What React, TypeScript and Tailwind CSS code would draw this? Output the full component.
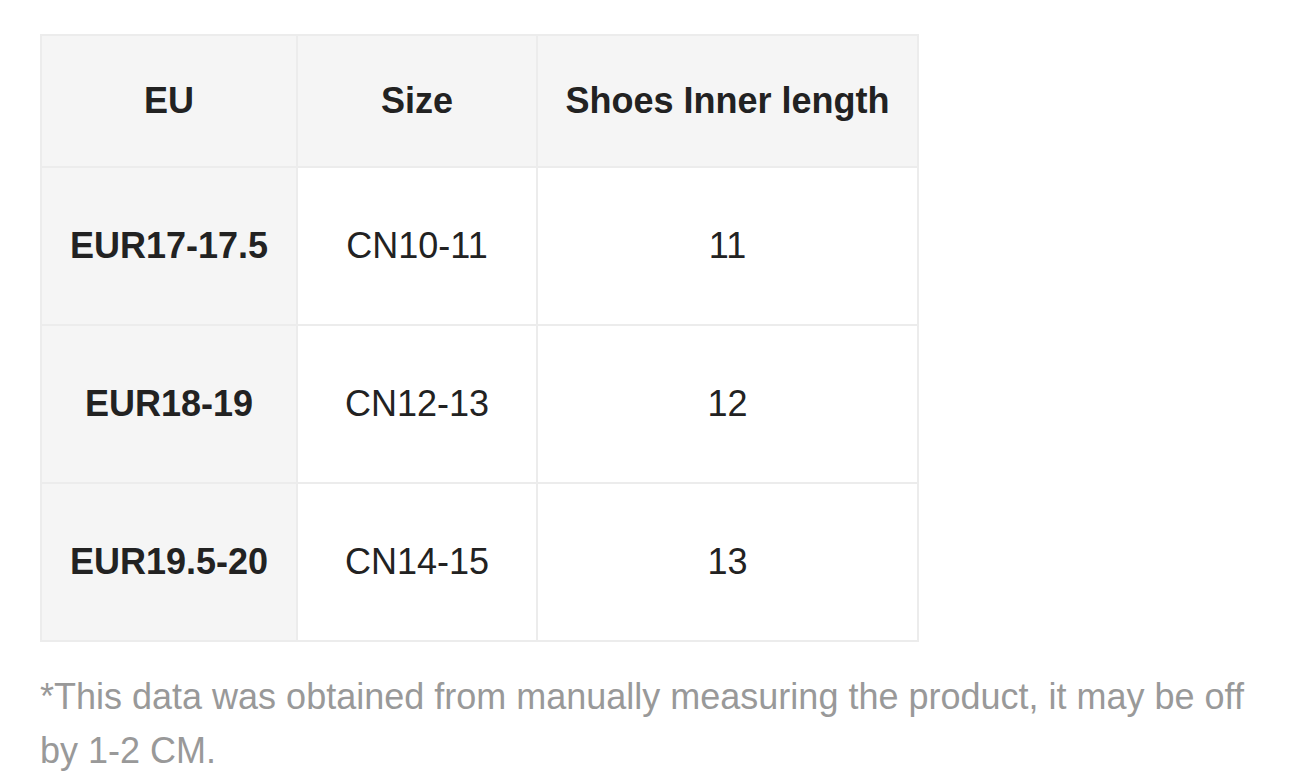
const rows = [
  ["EUR17-17.5", "CN10-11", "11"],
  ["EUR18-19", "CN12-13", "12"],
  ["EUR19.5-20", "CN14-15", "13"],
];

export default function App() {
  return (
    <div className="min-h-screen bg-white px-[40px] pt-[34px] [font-family:'Liberation_Sans',Arial,sans-serif]">
      <table className="border-collapse text-[36px] text-[#222]">
        <thead>
          <tr className="h-[132px] bg-[#f5f5f5]">
            <th className="w-[256px] border-2 border-[#ececec] font-bold">EU</th>
            <th className="w-[240px] border-2 border-[#ececec] font-bold">Size</th>
            <th className="w-[381px] border-2 border-[#ececec] font-bold">Shoes Inner length</th>
          </tr>
        </thead>
        <tbody>
          {rows.map((r) => (
            <tr key={r[0]} className="h-[158px]">
              <td className="border-2 border-[#ececec] bg-[#f5f5f5] text-center font-bold">{r[0]}</td>
              <td className="border-2 border-[#ececec] text-center">{r[1]}</td>
              <td className="border-2 border-[#ececec] text-center">{r[2]}</td>
            </tr>
          ))}
        </tbody>
      </table>
      <p className="mt-[28px] text-[36px] leading-[54px] text-[#999]">
        *This data was obtained from manually measuring the product, it may be off by 1-2 CM.
      </p>
    </div>
  );
}
